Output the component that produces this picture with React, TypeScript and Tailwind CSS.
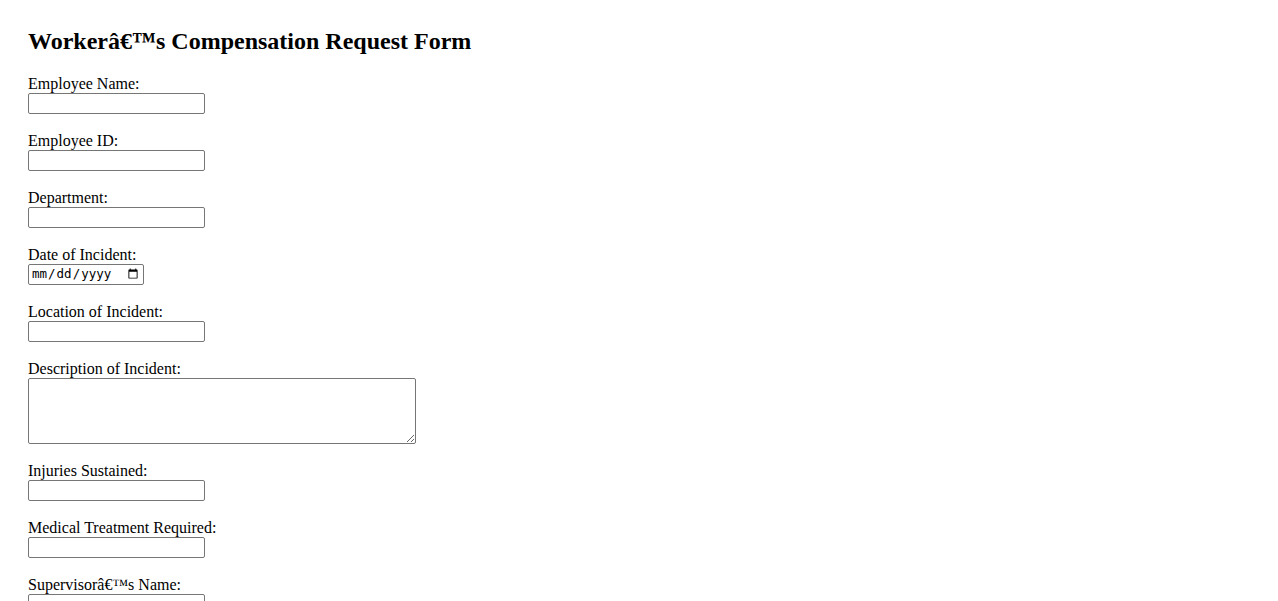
const fields: { label: string; kind?: "date" | "textarea" }[] = [
  { label: "Employee Name:" },
  { label: "Employee ID:" },
  { label: "Department:" },
  { label: "Date of Incident:", kind: "date" },
  { label: "Location of Incident:" },
  { label: "Description of Incident:", kind: "textarea" },
  { label: "Injuries Sustained:" },
  { label: "Medical Treatment Required:" },
  { label: "Supervisorâ€™s Name:" },
];

const App = () => {
  return (
    <div className="min-h-screen bg-white pl-[28px] pt-[27px] text-black font-['Liberation_Serif',serif]">
      <h2 className="text-[24px] font-bold leading-[28px]">
        Workerâ€™s Compensation Request Form
      </h2>

      <form className="mt-[19px] flex flex-col gap-[17px]">
        {fields.map((f) => (
          <div key={f.label} className="flex flex-col items-start">
            <label className="block h-[19px] text-[16px] leading-[20px]">{f.label}</label>
            {f.kind === "date" ? (
              <input
                type="date"
                className="h-[21px] w-[116px] rounded-[2px] border border-[#767676] bg-white px-[2px] text-[12.5px] font-['DejaVu_Sans_Mono',monospace]"
              />
            ) : f.kind === "textarea" ? (
              <textarea className="block h-[66px] w-[388px] rounded-[2px] border border-[#767676] bg-white text-[13.33px]" />
            ) : (
              <input
                type="text"
                className="h-[21px] w-[177px] rounded-[2px] border border-[#767676] bg-white text-[13.33px]"
              />
            )}
          </div>
        ))}
      </form>
    </div>
  );
};

export default App;
